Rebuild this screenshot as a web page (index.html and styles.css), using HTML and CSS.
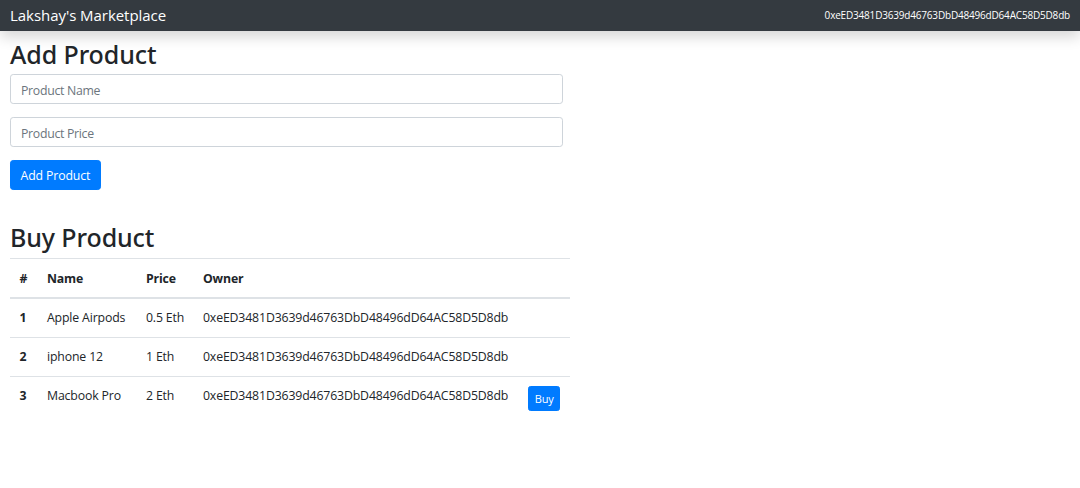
FILE: index.html
```html
<!DOCTYPE html>
<html lang="en">
<head>
<meta charset="utf-8">
<title>Lakshay's Marketplace</title>
<link rel="stylesheet" href="styles.css">
</head>
<body>
<nav class="navbar">
  <a class="brand" href="#">Lakshay's Marketplace</a>
  <small class="account">0xeED3481D3639d46763DbD48496dD64AC58D5D8db</small>
</nav>
<main class="content">
  <h2 class="heading">Add Product</h2>
  <form class="product-form">
    <input class="field" type="text" placeholder="Product Name">
    <input class="field" type="text" placeholder="Product Price">
    <button class="btn btn-add" type="button">Add Product</button>
  </form>
  <h2 class="heading heading-buy">Buy Product</h2>
  <table class="products">
    <thead>
      <tr><th class="c-id">#</th><th class="c-name">Name</th><th class="c-price">Price</th><th class="c-owner">Owner</th><th class="c-action"></th></tr>
    </thead>
    <tbody>
      <tr><th>1</th><td>Apple Airpods</td><td>0.5 Eth</td><td>0xeED3481D3639d46763DbD48496dD64AC58D5D8db</td><td></td></tr>
      <tr><th>2</th><td>iphone 12</td><td>1 Eth</td><td>0xeED3481D3639d46763DbD48496dD64AC58D5D8db</td><td></td></tr>
      <tr><th>3</th><td>Macbook Pro</td><td>2 Eth</td><td>0xeED3481D3639d46763DbD48496dD64AC58D5D8db</td><td><button class="btn btn-buy" type="button">Buy</button></td></tr>
    </tbody>
  </table>
</main>
</body>
</html>
```
FILE: styles.css
```css
* { box-sizing: border-box; }
html, body { margin: 0; padding: 0; }
body {
  font-family: "Open Sans", "Noto Sans", "Liberation Sans", sans-serif;
  font-size: 12.3px;
  letter-spacing: -0.15px;
  line-height: 19.2px;
  color: #212529;
  background: #fff;
  overflow: hidden;
}
.navbar {
  display: flex;
  align-items: center;
  justify-content: space-between;
  height: 31px;
  padding: 0 10px;
  background: #343a40;
  box-shadow: 0 6px 14px rgba(0, 0, 0, 0.16);
  color: #fff;
}
.brand { color: #fff; text-decoration: none; font-size: 15px; letter-spacing: -0.05px; }
.account { font-size: 10px; letter-spacing: -0.19px; color: #fff; }
.content { width: 570px; padding-left: 10px; }
.heading {
  margin: 0 0 4.4px;
  font-family: "Noto Sans", "Open Sans", sans-serif;
  font-size: 25px;
  line-height: 30.7px;
  font-weight: 500;
  letter-spacing: -0.1px;
  padding-top: 8px;
}
.heading-buy { margin: 0 0 5px; padding-top: 0; }
.product-form { display: flex; flex-direction: column; align-items: flex-start; width: 553px; }
.field {
  width: 100%;
  height: 30px;
  margin-bottom: 13px;
  padding: 2px 10px 0;
  border: 1px solid #ced4da;
  border-radius: 3.2px;
  font: inherit;
  letter-spacing: -0.3px;
  color: #495057;
}
.field::placeholder { color: #6c757d; opacity: 1; }
.btn {
  border: 1px solid #007bff;
  background: #007bff;
  color: #fff;
  font-family: inherit;
  letter-spacing: inherit;
  cursor: pointer;
}
.btn-add { height: 30px; padding: 0 9.6px; border-radius: 3.2px; font-size: 12.3px; margin-bottom: 32px; }
.btn-buy { height: 25px; width: 32.5px; padding: 0; border-radius: 2.6px; font-size: 11px; line-height: 1; display: block; }
.products { width: 560px; table-layout: fixed; border-collapse: collapse; }
.products th, .products td { padding: 9.6px; text-align: left; vertical-align: top; border-top: 1px solid #dee2e6; font-weight: 400; white-space: nowrap; }
.products tbody th, .products tbody td { padding: 9.2px 9.6px 9.6px; }
.products th { font-weight: 700; }
.products thead th { padding: 10px 9.6px 9.2px; border-bottom: 2px solid #dee2e6; }
.c-id { width: 27.4px; }
.c-name { width: 99px; }
.c-price { width: 57px; }
.c-owner { width: 325px; }
.c-action { width: 51.6px; }
```
